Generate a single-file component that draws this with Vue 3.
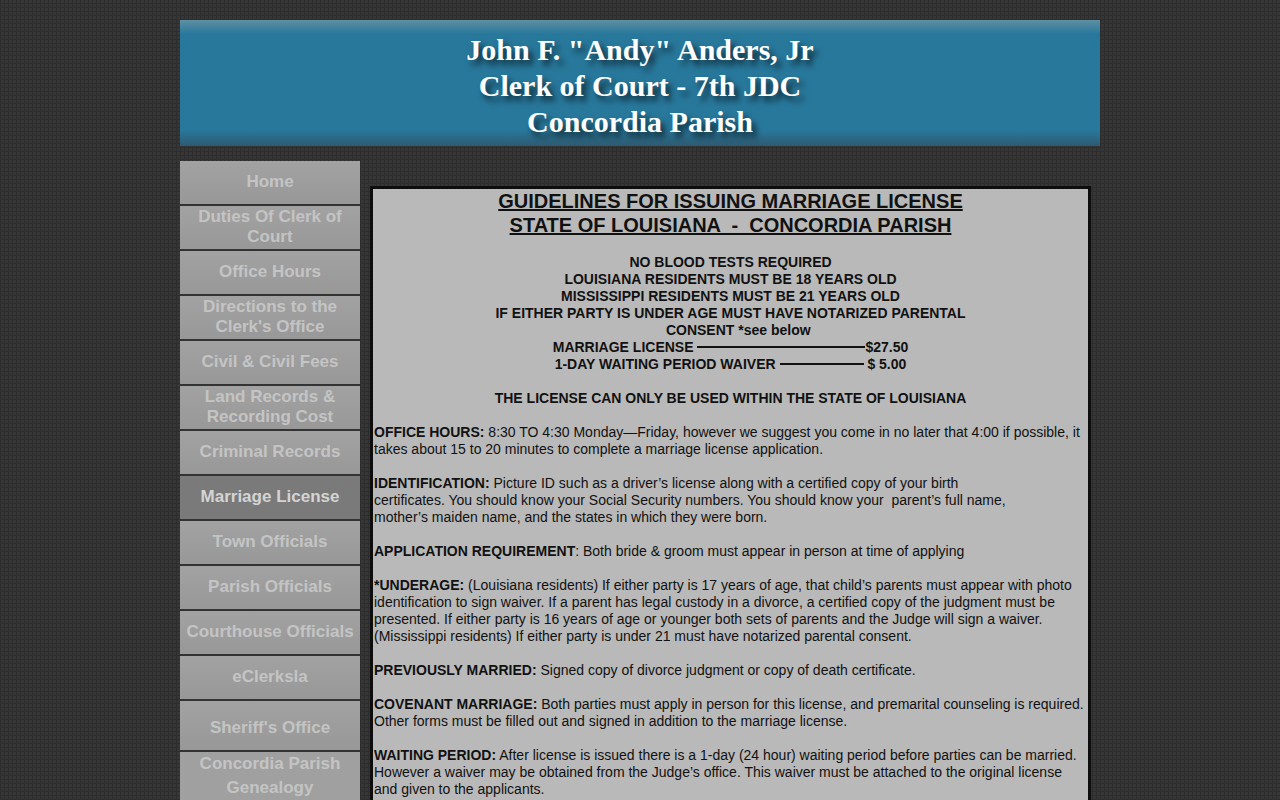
<template>
  <div class="page">
    <header class="banner">
      <h1>John F. "Andy" Anders, Jr<br>Clerk of Court - 7th JDC<br>Concordia Parish</h1>
    </header>

    <div class="columns">
      <nav class="side-nav">
        <a
          v-for="item in navItems"
          :key="item.label"
          class="nav-item"
          :class="{ active: item.active, tall: item.tall, genealogy: item.genealogy }"
        >{{ item.label }}</a>
      </nav>

      <main class="content">
        <h2>GUIDELINES FOR ISSUING MARRIAGE LICENSE<br>STATE OF LOUISIANA &nbsp;-&nbsp; CONCORDIA PARISH</h2>

        <div class="notice">
          <p>NO BLOOD TESTS REQUIRED</p>
          <p>LOUISIANA RESIDENTS MUST BE 18 YEARS OLD</p>
          <p>MISSISSIPPI RESIDENTS MUST BE 21 YEARS OLD</p>
          <p>IF EITHER PARTY IS UNDER AGE MUST HAVE NOTARIZED PARENTAL<br>&nbsp;&nbsp;&nbsp;&nbsp;CONSENT *see below</p>
          <p>MARRIAGE LICENSE <span class="dash w168"></span>$27.50</p>
          <p>1-DAY WAITING PERIOD WAIVER <span class="dash w84"></span> $ 5.00</p>
          <p class="gap">THE LICENSE CAN ONLY BE USED WITHIN THE STATE OF LOUISIANA</p>
        </div>

        <p class="para"><b>OFFICE HOURS:</b> 8:30 TO 4:30 Monday—Friday, however we suggest you come in no later that 4:00 if possible, it takes about 15 to 20 minutes to complete a marriage license application.</p>
        <p class="para"><b>IDENTIFICATION:</b> Picture ID such as a driver’s license along with a certified copy of your birth<br>certificates. You should know your Social Security numbers. You should know your &nbsp;parent’s full name,<br>mother’s maiden name, and the states in which they were born.</p>
        <p class="para"><b>APPLICATION REQUIREMENT</b>: Both bride &amp; groom must appear in person at time of applying</p>
        <p class="para"><b>*UNDERAGE:</b> (Louisiana residents) If either party is 17 years of age, that child’s parents must appear with photo identification to sign waiver. If a parent has legal custody in a divorce, a certified copy of the judgment must be presented. If either party is 16 years of age or younger both sets of parents and the Judge will sign a waiver. (Mississippi residents) If either party is under 21 must have notarized parental consent.</p>
        <p class="para"><b>PREVIOUSLY MARRIED:</b> Signed copy of divorce judgment or copy of death certificate.</p>
        <p class="para"><b>COVENANT MARRIAGE:</b> Both parties must apply in person for this license, and premarital counseling is required. Other forms must be filled out and signed in addition to the marriage license.</p>
        <p class="para"><b>WAITING PERIOD:</b> After license is issued there is a 1-day (24 hour) waiting period before parties can be married. However a waiver may be obtained from the Judge’s office. This waiver must be attached to the original license and given to the applicants.</p>
      </main>
    </div>
  </div>
</template>

<script setup>
const navItems = [
  { label: 'Home' },
  { label: 'Duties Of Clerk of Court' },
  { label: 'Office Hours' },
  { label: "Directions to the Clerk's Office" },
  { label: 'Civil & Civil Fees' },
  { label: 'Land Records & Recording Cost' },
  { label: 'Criminal Records' },
  { label: 'Marriage License', active: true },
  { label: 'Town Officials' },
  { label: 'Parish Officials' },
  { label: 'Courthouse Officials' },
  { label: 'eClerksla' },
  { label: "Sheriff's Office", tall: true },
  { label: 'Concordia Parish Genealogy', genealogy: true }
]
</script>

<style>
html,
body {
  background-color: #363636;
  background-image:
    repeating-linear-gradient(90deg, #2d2d2d 0 1px, transparent 1px 4px),
    repeating-linear-gradient(0deg, #2d2d2d 0 1px, transparent 1px 4px);
  overflow: hidden;
  height: 800px;
}
</style>

<style scoped>
.page {
  width: 920px;
  margin: 0 auto;
  padding-top: 20px;
  height: 780px;
  overflow: hidden;
}

.banner {
  height: 126px;
  background-color: #28789c;
  background-image:
    linear-gradient(180deg, #5f8fa3 0, #28789c 14px, #28789c 110px, #2f5a70 126px);
  text-align: center;
}

.banner h1 {
  margin: 0;
  padding-top: 12px;
  font-family: "Liberation Serif", serif;
  font-size: 30px;
  line-height: 36px;
  font-weight: bold;
  color: #fff;
  text-shadow: 4px 5px 6px rgba(0, 0, 0, 0.7);
}

.columns {
  display: flex;
  align-items: flex-start;
  padding-top: 15px;
}

.side-nav {
  flex: 0 0 180px;
  display: flex;
  flex-direction: column;
}

.nav-item {
  height: 45px;
  border-bottom: 2px solid #333;
  box-sizing: border-box;
  display: flex;
  align-items: center;
  justify-content: center;
  padding: 0 2px 2px;
  text-align: center;
  font-family: "Liberation Sans", Arial, sans-serif;
  font-size: 17px;
  line-height: 20px;
  font-weight: bold;
  color: #c4c4c4;
  background: linear-gradient(180deg, #a2a2a2, #989898);
}

.nav-item.active {
  color: #d4d4d4;
  background: #7a7a7a;
}

.nav-item.tall {
  height: 51px;
  padding-top: 7px;
}

.nav-item.genealogy {
  height: 49px;
  line-height: 24px;
  padding: 0 10px 2px;
  border-bottom: 0;
  background: #a0a0a0;
}

.content {
  margin: 25px 0 0 10px;
  width: 721px;
  box-sizing: border-box;
  border: 3px solid #0d0d0d;
  background-color: #b9b9b9;
  font-family: "Liberation Sans", Arial, sans-serif;
  font-size: 14px;
  line-height: 17px;
  color: #111;
}

.content h2 {
  margin: 0 0 17px;
  text-align: center;
  font-size: 20px;
  line-height: 24px;
  font-weight: bold;
  text-decoration: underline;
}

.notice {
  text-align: center;
  font-weight: bold;
  margin-bottom: 17px;
}

.notice p {
  margin: 0;
}

.notice .gap {
  margin-top: 17px;
}

.dash {
  display: inline-block;
  height: 2px;
  background: #111;
  vertical-align: 4px;
}

.w168 {
  width: 168px;
}

.w84 {
  width: 84px;
}

.para {
  margin: 0 0 17px;
  padding-left: 1px;
}
</style>
